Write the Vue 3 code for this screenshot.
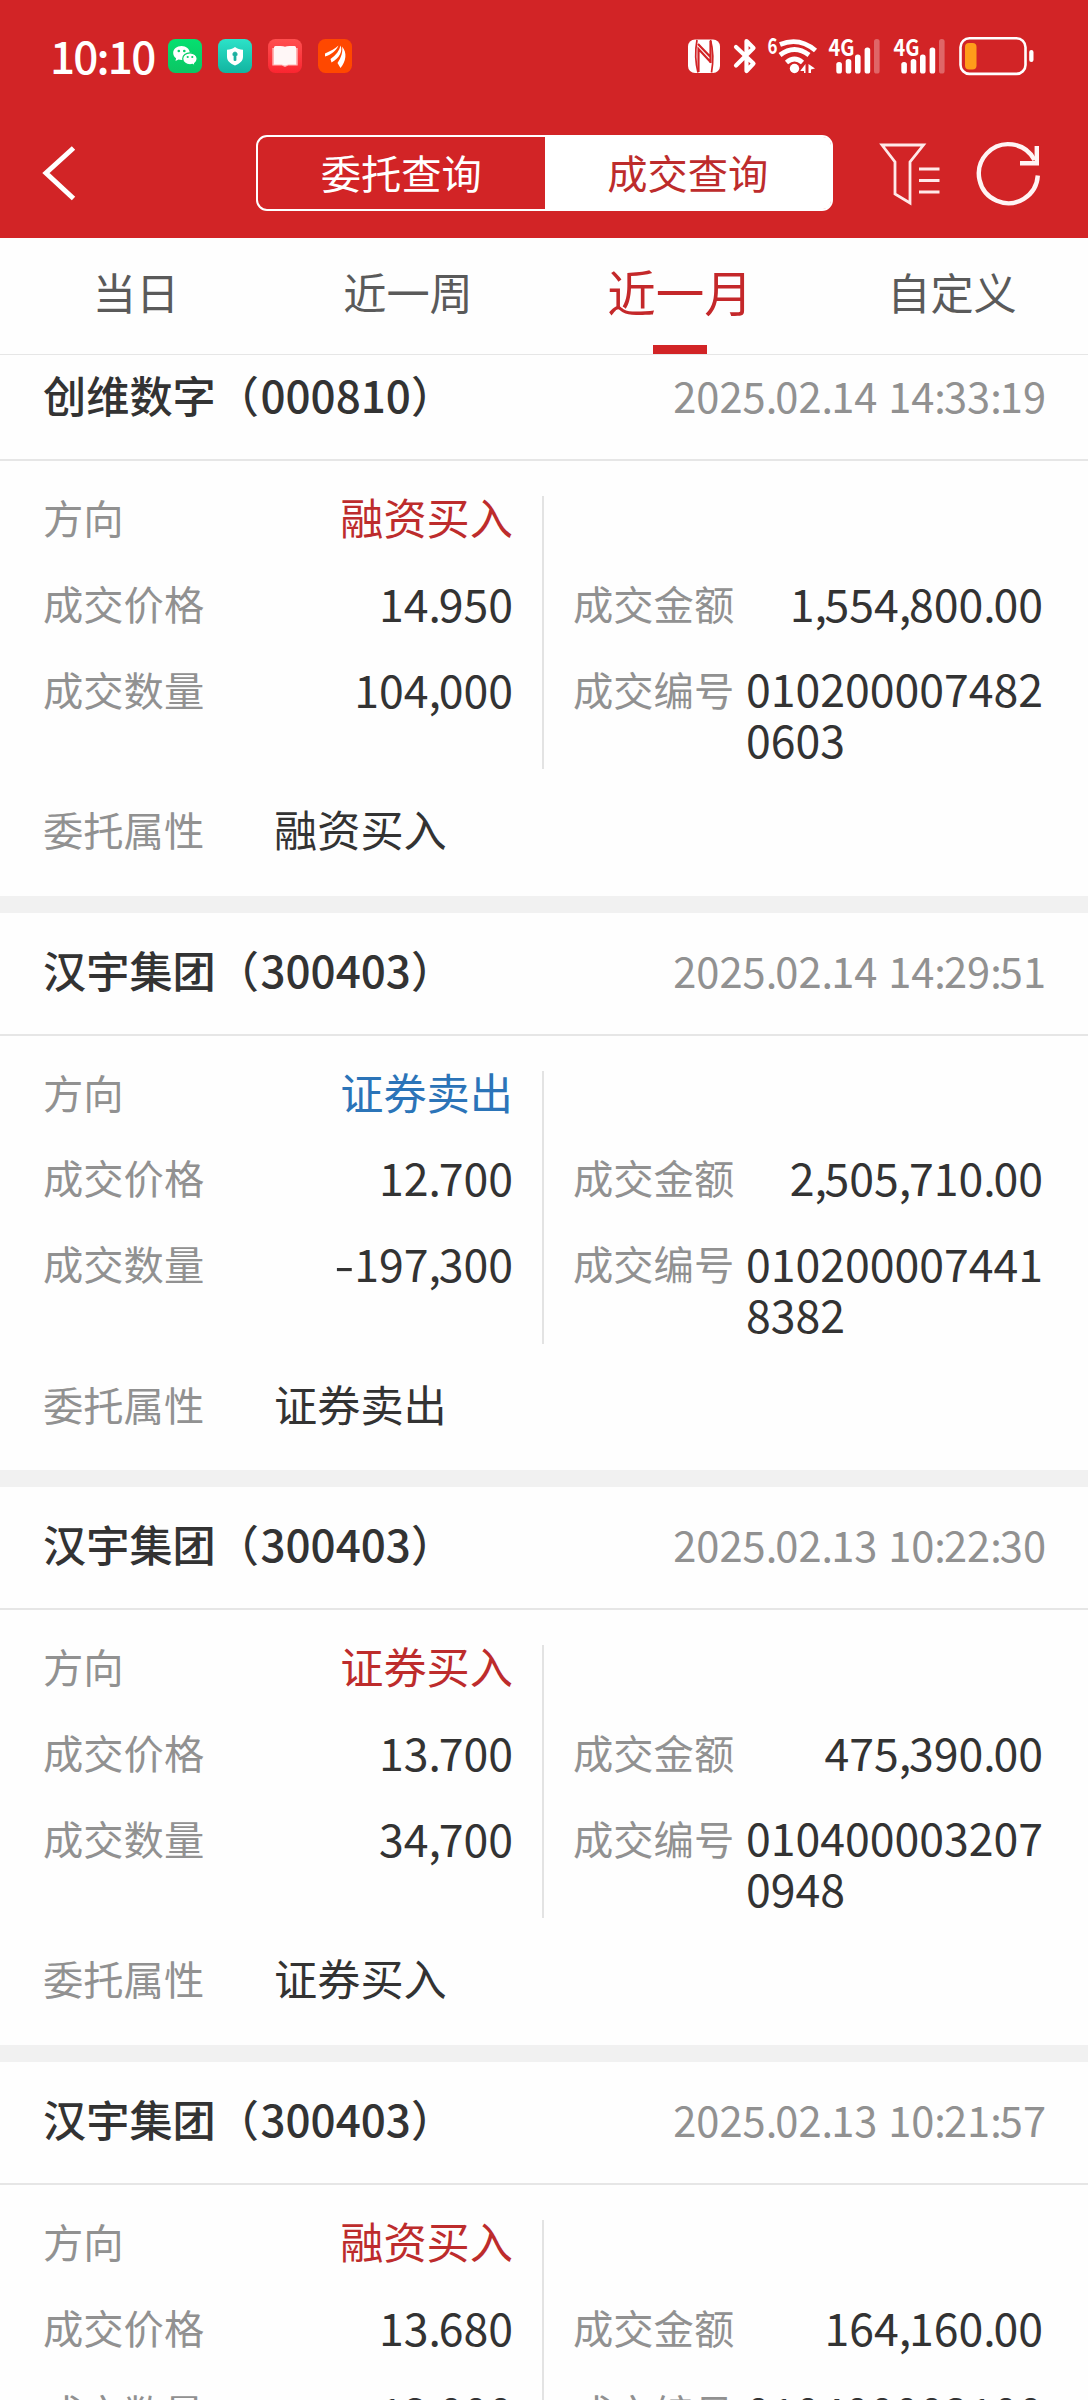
<script setup>
const tabs = ['当日', '近一周', '近一月', '自定义']
const activeTab = 2
const records = [
  { name: '创维数字', code: '000810', time: '2025.02.14 14:33:19', side: '融资买入', tone: 'buy', price: '14.950', amount: '1,554,800.00', qty: '104,000', no: '0102000074820603' },
  { name: '汉宇集团', code: '300403', time: '2025.02.14 14:29:51', side: '证券卖出', tone: 'sell', price: '12.700', amount: '2,505,710.00', qty: '-197,300', no: '0102000074418382' },
  { name: '汉宇集团', code: '300403', time: '2025.02.13 10:22:30', side: '证券买入', tone: 'buy', price: '13.700', amount: '475,390.00', qty: '34,700', no: '0104000032070948' },
  { name: '汉宇集团', code: '300403', time: '2025.02.13 10:21:57', side: '融资买入', tone: 'buy', price: '13.680', amount: '164,160.00', qty: '12,000', no: '010400003100' }
]
// Splits a number so that its punctuation can be spaced apart from its digits.
const kinds = { '.': 'p', ',': 'p', ':': 'p', ' ': 'sp', '-': 'neg' }
const runs = (s) => s.match(/[.,: -]|[^.,: -]+/g).map((t) => ({ t, k: kinds[t] || 'd' }))
</script>

<template>
  <div class="screen">
    <header class="top">
      <div class="status">
        <span class="clock">10:10</span>
        <div class="apps">
          <svg class="app" viewBox="0 0 34 34">
            <defs><linearGradient id="gw" x2="0" y2="1"><stop offset="0" stop-color="#05e070" /><stop offset="1" stop-color="#0cc563" /></linearGradient></defs>
            <rect width="34" height="34" rx="7.5" fill="url(#gw)" />
            <path d="M13.500 7C8.800 7 5.200 10 5.200 14c0 2.200 1.100 4 2.900 5.300l-.6 2.700 3-1.500c1 .3 2 .4 3 .4 4.600 0 8.300-3 8.300-6.900C21.800 10 18.100 7 13.500 7z" fill="#fff" />
            <path d="M22 13.800c-4.100 0-7.300 2.700-7.300 6s3.200 6 7.300 6c.9 0 1.800-.1 2.500-.4l2.600 1.300-.5-2.300c1.600-1.100 2.600-2.700 2.600-4.600 0-3.300-3.200-6-7.200-6z" fill="#fff" stroke="#08d068" stroke-width="1.200" />
            <g fill="#08d068"><circle cx="10.800" cy="12" r="1.300" /><circle cx="16.300" cy="12" r="1.300" /><circle cx="19.700" cy="18" r="1.100" /><circle cx="24.300" cy="18" r="1.100" /></g>
          </svg>
          <svg class="app" viewBox="0 0 34 34">
            <defs><linearGradient id="gs" x2="0" y2="1"><stop offset="0" stop-color="#2ce2c8" /><stop offset="1" stop-color="#12b4a0" /></linearGradient></defs>
            <rect width="34" height="34" rx="7.500" fill="url(#gs)" />
            <path d="M17 8c2.500 1.800 5 2.600 8 2.800v7c0 4.400-3.400 6.800-8 8.700-4.600-1.900-8-4.300-8-8.700v-7c3-.2 5.500-1 8-2.800z" fill="#fff" />
            <path d="M17 13a2.300 2.300 0 0 0-1 4.300V21.500h2v-4.200A2.300 2.300 0 0 0 17 13z" fill="#1cb0a0" stroke="#1cb0a0" stroke-width=".8" />
          </svg>
          <svg class="app" viewBox="0 0 34 34">
            <defs><linearGradient id="gb" x2="0" y2="1"><stop offset="0" stop-color="#ff5050" /><stop offset="1" stop-color="#fb2530" /></linearGradient></defs>
            <rect width="34" height="34" rx="7.500" fill="url(#gb)" />
            <path d="M4.300 9h25.400v17.500h-9.500l-3.200 1.500-3.200-1.500h-9.500z" fill="#ffb5b5" />
            <path d="M6 8.500q0-1.500 1.500-1.500h5q3 0 4.500.8Q18.500 7 21.500 7h5Q28 7 28 8.500v17h-7.500l-3.500 1-3.500-1H6z" fill="#fff7f7" />
          </svg>
          <svg class="app" viewBox="0 0 34 34">
            <rect width="34" height="34" rx="7.500" fill="#ff4800" />
            <path d="M7 14.500C13 12 17 9.500 20.500 6.500 18 12 13.500 15.500 7 17.500zM12.500 20C18 16 21.500 11.500 22.500 6.500 25 12.500 21.500 19 13.500 23.500zM19.500 24C23.500 18 25 13 24 7.500c5.500 6 4 15-1.500 21.500z" fill="#fff" />
          </svg>
        </div>
        <div class="sys">
          <svg width="43" height="50" viewBox="684 30 43 50">
            <rect x="688" y="39.500" width="32" height="33.500" rx="7" fill="#fff" />
            <path d="M698.500 72V49L711 62.500M710.500 41V63M698 44L710.500 57" fill="none" stroke="#d22426" stroke-width="2.200" />
            <path d="M697 40C695 51 695 61 698 72.500M710.500 40C713.500 51 713.500 61 711.500 72.500" fill="none" stroke="#d22426" stroke-width="1.700" />
          </svg>
          <svg width="36" height="50" viewBox="727 30 36 50">
            <path d="M736 47L753.500 63.500L746.500 71V41L753.500 48L736 65.500" fill="none" stroke="#fff" stroke-width="4.200" stroke-linejoin="round" stroke-linecap="round" />
          </svg>
          <svg width="60" height="50" viewBox="763 30 60 50">
            <text x="767.500" y="54" class="tiny six" textLength="10" lengthAdjust="spacingAndGlyphs">6</text>
            <g fill="none" stroke="#fff" stroke-width="4.800">
              <path d="M780 44.500Q799 36.500 815.500 50.500" />
              <path d="M780 55Q794.500 44 809 55" />
              <path d="M786.500 62.500Q794.500 55.500 802.500 62.500" />
            </g>
            <circle cx="794.500" cy="68.500" r="4.700" fill="#fff" />
            <path d="M800.500 70.500L805.500 64V73H804V71H800.500zM808.500 64L815 68.500 811 69.500V73H808.500z" fill="#fff" />
          </svg>
          <svg v-for="n in 2" :key="n" width="65" height="50" viewBox="823 30 65 50">
            <text x="828.500" y="56" class="tiny" textLength="26" lengthAdjust="spacingAndGlyphs">4G</text>
            <g fill="#fff">
              <rect x="836.300" y="62" width="5.600" height="11.500" rx="2.600" />
              <rect x="845.700" y="59" width="5.600" height="14.500" rx="2.600" />
              <rect x="855" y="54.500" width="5.600" height="19" rx="2.600" />
              <rect x="864.600" y="47.500" width="5.600" height="26" rx="2.600" />
              <rect x="874" y="39" width="5.600" height="34.500" rx="2.600" opacity=".3" />
            </g>
          </svg>
          <svg width="87" height="50" viewBox="953 30 87 50">
            <rect x="960.500" y="38.300" width="65" height="35.600" rx="9" fill="none" stroke="#fff" stroke-width="2.600" />
            <rect x="965" y="43" width="11.500" height="26.500" rx="4" fill="#ff9c1a" />
            <rect x="1029.200" y="50" width="4.300" height="12" rx="2.100" fill="#fff" />
          </svg>
        </div>
      </div>
      <nav class="nav">
        <svg class="back" width="40" height="60" viewBox="40 143 40 60">
          <path d="M73.500 148L46 173L73.500 198.500" fill="none" stroke="#fff" stroke-width="5" />
        </svg>
        <div class="seg">
          <span class="seg-item">委托查询</span>
          <span class="seg-item on">成交查询</span>
        </div>
        <svg class="filter" width="64" height="66" viewBox="878 140 64 66">
          <g fill="none" stroke="#ffe9e9" stroke-width="2.800">
            <path d="M882 145H923.500L910 162V203L895 194V162z" />
            <path d="M919 169H939.500M919 180.500H939.500M919 192H939.500" />
          </g>
        </svg>
        <svg class="reload" width="70" height="70" viewBox="974 138 70 70">
          <g fill="none" stroke="#fff4f4" stroke-width="4.400">
            <path d="M1037.800 175.500A29.500 29.500 0 1 1 1034.500 160" />
            <path d="M1036.800 146V163.300H1020" />
          </g>
        </svg>
      </nav>
    </header>

    <div class="tabs">
      <div v-for="(t, i) in tabs" :key="t" class="tab" :class="{ active: i === activeTab }"><span>{{ t }}</span></div>
    </div>

    <main class="list">
      <article v-for="(r, i) in records" :key="i" class="card">
        <div class="card-head">
          <h2>{{ r.name }}（<span class="code">{{ r.code }}</span><span class="close">）</span></h2>
          <time><span v-for="(c, k) in runs(r.time)" :key="k" :class="c.k">{{ c.t }}</span></time>
        </div>
        <div class="card-body">
          <div class="cols">
            <div class="col left">
              <div class="row"><label>方向</label><b :class="r.tone">{{ r.side }}</b></div>
              <div class="row"><label>成交价格</label><b class="num"><span v-for="(c, k) in runs(r.price)" :key="k" :class="c.k">{{ c.t }}</span></b></div>
              <div class="row"><label>成交数量</label><b class="num"><span v-for="(c, k) in runs(r.qty)" :key="k" :class="c.k">{{ c.t }}</span></b></div>
            </div>
            <div class="col right">
              <div class="row"></div>
              <div class="row"><label>成交金额</label><b class="num"><span v-for="(c, k) in runs(r.amount)" :key="k" :class="c.k">{{ c.t }}</span></b></div>
              <div class="row"><label>成交编号</label><b class="num serial">{{ r.no }}</b></div>
            </div>
          </div>
          <div v-if="i < 3" class="attr"><label>委托属性</label><b>{{ r.side }}</b></div>
        </div>
      </article>
    </main>
  </div>
</template>

<style>
body { margin: 0; background: #fff; }
</style>

<style scoped>
.screen {
  width: 1088px;
  height: 2400px;
  overflow: hidden;
  display: flex;
  flex-direction: column;
  background: #fefefe;
  color: #333;
  font-family: "Noto Sans CJK SC", "Noto Sans", sans-serif;
}
svg { display: block; flex: none; }
.top { flex: none; height: 238px; background: #d22426; color: #fff; position: relative; z-index: 1; }
.status { height: 80px; box-sizing: border-box; padding: 29px 48px 0 50px; display: flex; }
.clock { width: 118px; flex: none; font-size: 44px; font-weight: 500; line-height: 52px; letter-spacing: -1.800px; white-space: nowrap; }
.apps { display: flex; gap: 16px; padding-top: 10px; }
.app { width: 34px; height: 34px; }
.sys { margin-left: auto; padding-top: 1px; display: flex; }
.tiny { font-size: 23px; font-weight: 700; fill: #fff; }
.six { font-size: 22px; }
.nav { height: 158px; display: flex; padding: 55px 44px 0 40px; box-sizing: border-box; }
.back { margin: 8px 176px 0 0; }
.seg { width: 577px; height: 76px; box-sizing: border-box; border: 2px solid #fff; border-radius: 11px; display: flex; flex: none; }
.seg-item { flex: 1; text-align: center; font-size: 40.300px; line-height: 70px; }
.seg-item.on { background: #fff; color: #bd2c2c; border-radius: 0 8px 8px 0; }
.filter { margin: 5px 32px 0 45px; }
.reload { margin-top: 3px; }
.tabs { flex: none; height: 117px; box-sizing: border-box; border-bottom: 1px solid #e6e6e6; display: flex; background: #fefefe; position: relative; z-index: 1; }
.tab { flex: 1; display: flex; flex-direction: column; align-items: center; font-size: 43.200px; line-height: 107px; color: #5a5a5a; }
.tab span { height: 107px; }
.tab.active { font-size: 48.500px; color: #c4282a; }
.tab.active::after { content: ""; width: 54px; height: 9px; background: #d22426; }
.list { margin-top: -17px; }
.card { height: 574.600px; box-sizing: border-box; border-bottom: 17px solid #f1f1f1; }
.card-head { height: 123px; box-sizing: border-box; border-bottom: 2px solid #e6e6e6; padding: 0 42px 0 43px; display: flex; justify-content: space-between; line-height: 113px; }
h2 { margin: 0; font-size: 43.200px; font-weight: 500; white-space: nowrap; }
.code { font-size: 44px; line-height: 1; margin-left: 1.500px; }
.close { margin-left: 0; }
time { font-size: 41.600px; color: #919191; padding-top: 1px; white-space: nowrap; }
time .p { letter-spacing: -1.900px; }
time .sp { letter-spacing: 1.500px; }
.cols { display: flex; margin-top: 35px; height: 273px; }
.col { box-sizing: border-box; }
.left { width: 544px; border-right: 2px solid #e3e3e3; padding: 0 29px 0 43px; }
.right { width: 544px; padding: 0 45px 0 29px; }
.row { display: flex; justify-content: space-between; height: 85.800px; line-height: 41px; white-space: nowrap; }
label { font-size: 40.300px; color: #919191; }
b { font-weight: 400; font-size: 43.200px; }
.num { font-size: 44.600px; line-height: 41px; }
.num .p { letter-spacing: -2.200px; }
.neg { display: inline-block; transform: scaleX(1.300); transform-origin: 100% 50%; }
.serial { width: 297px; margin-top: -5.500px; line-height: 51px; white-space: normal; word-break: break-all; }
.buy { color: #bd2c2c; }
.sell { color: #2b74b8; }
.attr { display: flex; margin-top: 38px; padding-left: 43px; line-height: 43px; }
.attr label { width: 231px; }
</style>
